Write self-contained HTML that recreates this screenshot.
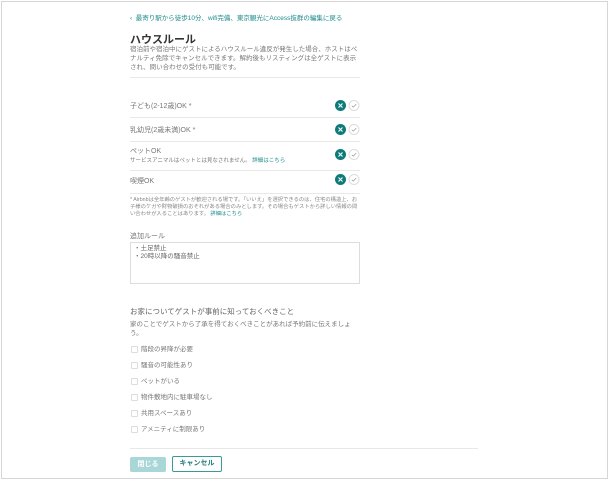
<!DOCTYPE html>
<html><head><meta charset="utf-8"><style>
body{margin:0;width:609px;height:480px;background:#fff;font-family:"Liberation Sans","Noto Sans CJK JP",sans-serif;position:relative;overflow:hidden;color:#555}
.frame{position:absolute;left:1px;top:1px;width:605px;height:476px;border:1px solid #d6d6d6}
.a{position:absolute;white-space:nowrap}
.hr{position:absolute;left:130px;width:230px;height:1px;background:#e8e8e8}
.t{font-size:7px;color:#777}
.x{position:absolute;width:11px;height:11px;border-radius:50%;background:#0e7b7b}
.c{position:absolute;width:10px;height:10px;border-radius:50%;border:1px solid #ddd;background:#fff}
.cb{position:absolute;left:131px;width:5px;height:5px;border:1px solid #ddd;border-radius:1px}
.l{position:absolute;left:141px;font-size:6.5px;color:#777;white-space:nowrap}
</style></head><body>
<div class="frame"></div>
<div class="a" style="left:130px;top:12px;font-size:6.5px;color:#1f8b8b">‹&nbsp; 最寄り駅から徒歩10分、wifi完備、東京観光にAccess抜群の編集に戻る</div>
<div class="a" style="left:130px;top:31px;font-size:11px;font-weight:bold;color:#333">ハウスルール</div>
<div class="a" style="left:130px;top:45px;font-size:6.5px;line-height:9px;color:#777;white-space:normal;width:232px">宿泊前や宿泊中にゲストによるハウスルール違反が発生した場合、ホストはペナルティ免除でキャンセルできます。解約後もリスティングは全ゲストに表示され、問い合わせの受付も可能です。</div>
<div class="hr" style="top:77px"></div>
<div class="a t" style="left:130px;top:101px">子ども(2-12歳)OK *</div>
<div class="hr" style="top:117px"></div>
<div class="a t" style="left:130px;top:125px">乳幼児(2歳未満)OK *</div>
<div class="hr" style="top:141px"></div>
<div class="a t" style="left:130px;top:146px">ペットOK</div>
<div class="a" style="left:130px;top:156px;font-size:5.5px;color:#777">サービスアニマルはペットとは見なされません。 <span style="color:#1f8b8b">詳細はこちら</span></div>
<div class="hr" style="top:170px"></div>
<div class="a t" style="left:130px;top:176px">喫煙OK</div>
<div class="hr" style="top:193px"></div>
<svg class="a" style="left:0;top:0" width="609" height="200">
<g id="tg">
<circle cx="340.5" cy="105.5" r="5.5" fill="#0e7b7b"/><path d="M338.5 103.5l4 4M342.5 103.5l-4 4" stroke="#fff" stroke-width="1.1"/>
<circle cx="354" cy="105.5" r="5" fill="#fff" stroke="#ddd"/><path d="M351.8 105.7l1.4 1.4 3-3" stroke="#999" stroke-width=".7" fill="none"/>
</g>
<use href="#tg" y="24"/><use href="#tg" y="49"/><use href="#tg" y="74"/>
</svg>
<div class="a" style="left:130px;top:197px;font-size:5.3px;line-height:7px;color:#888;white-space:normal;width:232px">* Airbnbは全年齢のゲストが歓迎される場です。「いいえ」を選択できるのは、住宅の構造上、お子様のケガや財物破損のおそれがある場合のみとします。その場合もゲストから詳しい情報の問い合わせが入ることはあります。 <span style="color:#1f8b8b">詳細はこちら</span></div>
<div class="a t" style="left:130px;top:231px">追加ルール</div>
<div class="a" style="left:130px;top:242px;width:228px;height:40px;border:1px solid #ddd"></div>
<div class="a" style="left:134px;top:245px;font-size:6.5px;line-height:8px;color:#666">・土足禁止<br>・20時以降の騒音禁止</div>
<div class="a" style="left:130px;top:306px;font-size:7.5px;color:#666">お家についてゲストが事前に知っておくべきこと</div>
<div class="a" style="left:130px;top:320px;font-size:6.5px;line-height:9px;color:#777;white-space:normal;width:222px">家のことでゲストから了承を得ておくべきことがあれば予約前に伝えましょう。</div>
<div class="cb" style="top:346px"></div><div class="l" style="top:343px">階段の昇降が必要</div>
<div class="cb" style="top:362px"></div><div class="l" style="top:359px">騒音の可能性あり</div>
<div class="cb" style="top:378px"></div><div class="l" style="top:375px">ペットがいる</div>
<div class="cb" style="top:394px"></div><div class="l" style="top:391px">物件敷地内に駐車場なし</div>
<div class="cb" style="top:410px"></div><div class="l" style="top:407px">共用スペースあり</div>
<div class="cb" style="top:426px"></div><div class="l" style="top:423px">アメニティに制限あり</div>
<div class="a" style="left:130px;top:448px;width:348px;height:1px;background:#e8e8e8"></div>
<div class="a" style="left:130px;top:457px;width:36px;height:15px;background:#a9d6d6;border-radius:2px;color:#fff;font-size:7px;font-weight:bold;text-align:center;line-height:15px">閉じる</div>
<div class="a" style="left:172px;top:456px;width:48px;height:14px;border:1.5px solid #3a9a9a;border-radius:2px;color:#1f7b7b;font-size:7px;font-weight:bold;text-align:center;line-height:14px">キャンセル</div>
</body></html>
